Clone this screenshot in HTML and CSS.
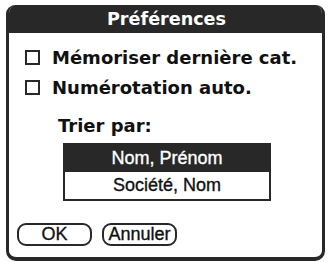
FILE: index.html
```html
<!DOCTYPE html>
<html lang="fr">
<head>
<meta charset="utf-8">
<title>Préférences</title>
<link rel="stylesheet" href="styles.css">
</head>
<body>
<div class="dialog">
  <div class="title">Préférences</div>
  <div class="content">
    <div class="check-row"><span class="box"></span><span class="label">Mémoriser dernière cat.</span></div>
    <div class="check-row"><span class="box"></span><span class="label">Numérotation auto.</span></div>
    <div class="sort-label">Trier par:</div>
    <div class="list">
      <div class="item selected">Nom, Prénom</div>
      <div class="item">Société, Nom</div>
    </div>
    <div class="buttons">
      <div class="btn">OK</div>
      <div class="btn">Annuler</div>
    </div>
  </div>
</div>
</body>
</html>
```
FILE: styles.css
```css
html, body {
  margin: 0;
  padding: 0;
  background: #ffffff;
}
body {
  width: 329px;
  height: 262px;
  overflow: hidden;
}
.dialog {
  box-sizing: border-box;
  margin: 5px 4px 1px 6px;
  width: 319px;
  height: 256px;
  border: 3px solid #282828;
  border-top: 0;
  border-bottom-width: 4px;
  border-radius: 9px 9px 10px 10px;
  overflow: hidden;
  background: #ffffff;
}
.title {
  height: 28px;
  background: #282828;
  color: #ffffff;
  font-family: "DejaVu Sans", sans-serif;
  font-weight: bold;
  font-size: 17.6px;
  line-height: 28px;
  text-align: center;
  padding-left: 2px;
}
.content {
  padding-top: 9px;
  font-family: "DejaVu Sans", sans-serif;
  color: #111111;
}
.check-row {
  display: flex;
  align-items: center;
  height: 30px;
  padding-left: 16px;
}
.box {
  box-sizing: border-box;
  width: 15px;
  height: 15px;
  border: 2px solid #282828;
  flex: none;
}
.label {
  margin-left: 12px;
  font-weight: bold;
  font-size: 18px;
}
.sort-label {
  margin-top: 13px;
  height: 22px;
  line-height: 22px;
  padding-left: 49px;
  font-weight: bold;
  font-size: 18px;
}
.list {
  margin: 6px 0 0 54px;
  width: 208px;
  box-sizing: border-box;
  border: 2px solid #282828;
  font-family: "Liberation Sans", sans-serif;
  font-size: 18px;
}
.item {
  height: 27px;
  line-height: 27px;
  text-align: center;
  -webkit-text-stroke: 0.35px currentColor;
}
.item.selected {
  background: #282828;
  color: #ffffff;
}
.buttons {
  display: flex;
  gap: 10px;
  margin: 22px 0 0 8px;
}
.btn {
  box-sizing: border-box;
  width: 75px;
  height: 23px;
  border: 2px solid #282828;
  border-radius: 9px;
  font-family: "Liberation Sans", sans-serif;
  font-size: 18px;
  line-height: 19px;
  text-align: center;
  -webkit-text-stroke: 0.35px currentColor;
}
```
